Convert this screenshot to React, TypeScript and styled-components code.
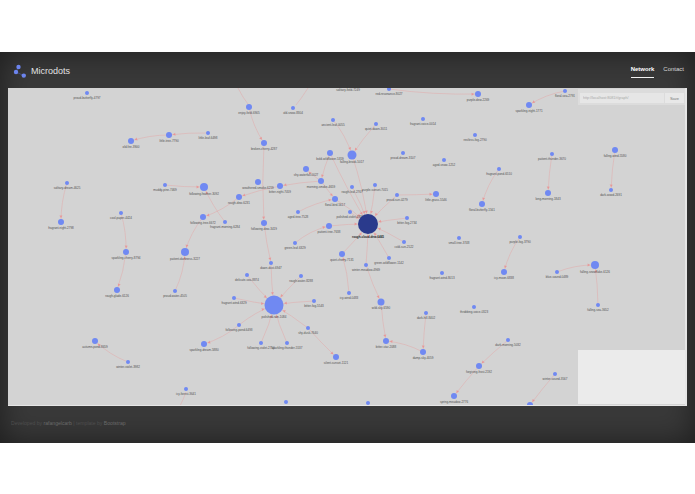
import React, { FC } from "react";
import styled, { createGlobalStyle } from "styled-components";

type GraphNode = { id: string; x: number; y: number; r: number; dark?: boolean };

const NODES: GraphNode[] = [
  { id: "proud-butterfly-4797", x: 87, y: 93, r: 2 },
  { id: "little-tree-7790", x: 169, y: 135, r: 3 },
  { id: "little-leaf-6498", x: 208, y: 133, r: 2 },
  { id: "old-fire-3900", x: 131, y: 141, r: 3 },
  { id: "enjoy-field-6905", x: 249, y: 107, r: 3 },
  { id: "old-snow-8304", x: 293, y: 108, r: 2 },
  { id: "solitary-field-7249", x: 348, y: 85, r: 2 },
  { id: "red-resonance-8027", x: 389, y: 89, r: 2 },
  { id: "ancient-leaf-0055", x: 333, y: 120, r: 2 },
  { id: "quiet-dawn-3011", x: 376, y: 124, r: 2 },
  { id: "fragrant-voice-0014", x: 423, y: 119, r: 2 },
  { id: "broken-cherry-4287", x: 264, y: 143, r: 3 },
  { id: "bold-wildflower-5359", x: 330, y: 153, r: 3 },
  { id: "falling-brook-5017", x: 352, y: 155, r: 4.5 },
  { id: "proud-dream-3107", x: 403, y: 153, r: 2 },
  { id: "aged-snow-1252", x: 444, y: 160, r: 2 },
  { id: "shy-waterfall-0027", x: 306, y: 169, r: 3 },
  { id: "morning-smoke-4659", x: 321, y: 181, r: 3 },
  { id: "weathered-smoke-6259", x: 258, y: 182, r: 3 },
  { id: "bitter-night-7059", x: 280, y: 186, r: 3 },
  { id: "rough-leaf-2767", x: 352, y: 187, r: 2 },
  { id: "purple-sunset-7015", x: 375, y: 185, r: 2 },
  { id: "proud-sun-0279", x: 397, y: 195, r: 2 },
  { id: "little-grass-5546", x: 436, y: 194, r: 3 },
  { id: "rough-dew-6231", x: 239, y: 197, r: 3 },
  { id: "floral-bird-5617", x: 335, y: 199, r: 3 },
  { id: "purple-dew-2269", x: 478, y: 94, r: 3 },
  { id: "floral-sea-2791", x: 565, y: 91, r: 2 },
  { id: "sparkling-night-1771", x: 529, y: 105, r: 3 },
  { id: "restless-fog-2790", x: 475, y: 135, r: 2 },
  { id: "patient-thunder-3670", x: 552, y: 154, r: 2 },
  { id: "fragrant-pond-6510", x: 499, y: 169, r: 2 },
  { id: "falling-wind-5580", x: 615, y: 150, r: 3 },
  { id: "solitary-dream-4625", x: 67, y: 183, r: 2 },
  { id: "fragrant-night-2798", x: 61, y: 222, r: 3 },
  { id: "muddy-pine-7469", x: 165, y: 185, r: 2 },
  { id: "following-feather-3092", x: 204, y: 187, r: 4 },
  { id: "cool-paper-4424", x: 121, y: 213, r: 2 },
  { id: "following-tree-6672", x: 203, y: 217, r: 3 },
  { id: "fragrant-morning-6284", x: 225, y: 222, r: 2 },
  { id: "sparkling-cherry-8794", x: 126, y: 252, r: 3 },
  { id: "patient-darkness-3227", x: 185, y: 252, r: 4 },
  { id: "rough-glade-6126", x: 117, y: 290, r: 3 },
  { id: "proud-water-4505", x: 175, y: 291, r: 2 },
  { id: "aged-tree-7528", x: 298, y: 212, r: 2 },
  { id: "polished-violet-0338", x: 350, y: 212, r: 2 },
  { id: "rough-cloud-dew-6465", x: 368, y: 224, r: 10, dark: true },
  { id: "bitter-fog-2734", x: 407, y: 218, r: 2 },
  { id: "patient-tree-7638", x: 329, y: 226, r: 3 },
  { id: "following-dew-3419", x: 264, y: 223, r: 3 },
  { id: "cold-sun-2522", x: 404, y: 242, r: 2 },
  { id: "green-leaf-6329", x: 295, y: 243, r: 2 },
  { id: "quiet-cherry-7131", x: 342, y: 254, r: 3 },
  { id: "green-wildflower-1142", x: 389, y: 258, r: 2 },
  { id: "winter-meadow-4969", x: 366, y: 265, r: 2 },
  { id: "dawn-dust-6947", x: 271, y: 263, r: 2 },
  { id: "fragrant-wind-8013", x: 442, y: 273, r: 2 },
  { id: "delicate-sea-8874", x: 247, y: 275, r: 2 },
  { id: "rough-water-8288", x: 301, y: 276, r: 2 },
  { id: "icy-wind-0483", x: 349, y: 293, r: 2 },
  { id: "polished-rain-1084", x: 274, y: 305, r: 9.5 },
  { id: "small-tree-3748", x: 459, y: 238, r: 2 },
  { id: "wild-sky-6590", x: 381, y: 302, r: 3.5 },
  { id: "floral-butterfly-1561", x: 482, y: 204, r: 3 },
  { id: "long-morning-1843", x: 548, y: 193, r: 3 },
  { id: "dark-wood-2691", x: 611, y: 190, r: 2 },
  { id: "purple-fog-3790", x: 520, y: 237, r: 2 },
  { id: "icy-moon-6838", x: 504, y: 272, r: 3 },
  { id: "blue-sound-0489", x: 557, y: 272, r: 2 },
  { id: "falling-snowflake-6126", x: 595, y: 265, r: 4 },
  { id: "falling-sea-3652", x: 598, y: 305, r: 2 },
  { id: "throbbing-voice-0323", x: 474, y: 307, r: 2 },
  { id: "fragrant-wind-6329", x: 234, y: 298, r: 2 },
  { id: "bitter-fog-5543", x: 314, y: 301, r: 2 },
  { id: "following-pond-6493", x: 239, y: 325, r: 2 },
  { id: "shy-dusk-7640", x: 308, y: 328, r: 2 },
  { id: "following-violet-2750", x: 261, y: 343, r: 2 },
  { id: "sparkling-thunder-5537", x: 287, y: 343, r: 2 },
  { id: "sparkling-dream-5880", x: 204, y: 344, r: 3 },
  { id: "silent-sunset-1121", x: 336, y: 357, r: 3 },
  { id: "autumn-pond-8659", x: 95, y: 341, r: 3 },
  { id: "winter-violet-3982", x: 128, y: 362, r: 2 },
  { id: "icy-forest-3641", x: 186, y: 389, r: 2 },
  { id: "silly-sun-3821", x: 286, y: 402, r: 2 },
  { id: "small-moon-1184", x: 368, y: 403, r: 2 },
  { id: "dark-hill-8402", x: 426, y: 313, r: 2 },
  { id: "bitter-star-2088", x: 386, y: 341, r: 3 },
  { id: "damp-sky-4059", x: 423, y: 352, r: 3 },
  { id: "dark-morning-5032", x: 508, y: 340, r: 2 },
  { id: "forgiving-frost-2192", x: 479, y: 366, r: 3 },
  { id: "winter-sound-3567", x: 555, y: 374, r: 2 },
  { id: "spring-meadow-2776", x: 454, y: 396, r: 3 },
  { id: "calm-river-4410", x: 530, y: 405, r: 3 },
];

// source, target, bend of the curve
const EDGES: [string, string, number][] = [
  ["little-leaf-6498", "little-tree-7790", 0.04],
  ["little-tree-7790", "old-fire-3900", 0.08],
  ["solitary-dream-4625", "fragrant-night-2798", 0.08],
  ["cool-paper-4424", "sparkling-cherry-8794", -0.08],
  ["sparkling-cherry-8794", "rough-glade-6126", -0.06],
  ["muddy-pine-7469", "following-feather-3092", 0.03],
  ["fragrant-morning-6284", "following-feather-3092", -0.06],
  ["rough-dew-6231", "following-tree-6672", -0.1],
  ["following-tree-6672", "patient-darkness-3227", 0.1],
  ["proud-water-4505", "patient-darkness-3227", 0.1],
  ["bitter-night-7059", "rough-dew-6231", 0.04],
  ["morning-smoke-4659", "bitter-night-7059", 0.03],
  ["morning-smoke-4659", "shy-waterfall-0027", -0.05],
  ["bold-wildflower-5359", "morning-smoke-4659", 0.04],
  ["morning-smoke-4659", "floral-bird-5617", 0.02],
  ["enjoy-field-6905", "broken-cherry-4287", 0.1],
  ["broken-cherry-4287", "following-dew-3419", 0.03],
  ["following-dew-3419", "dawn-dust-6947", 0.03],
  ["dawn-dust-6947", "polished-rain-1084", 0.03],
  ["ancient-leaf-0055", "falling-brook-5017", -0.1],
  ["quiet-dawn-3011", "falling-brook-5017", 0.04],
  ["delicate-sea-8874", "polished-rain-1084", 0.04],
  ["rough-water-8288", "polished-rain-1084", 0.03],
  ["fragrant-wind-6329", "polished-rain-1084", 0.03],
  ["bitter-fog-5543", "polished-rain-1084", 0.03],
  ["following-pond-6493", "polished-rain-1084", -0.08],
  ["shy-dusk-7640", "polished-rain-1084", 0.03],
  ["following-violet-2750", "polished-rain-1084", 0.06],
  ["sparkling-thunder-5537", "polished-rain-1084", -0.06],
  ["following-pond-6493", "sparkling-dream-5880", -0.1],
  ["shy-dusk-7640", "silent-sunset-1121", 0.02],
  ["winter-violet-3982", "autumn-pond-8659", -0.1],
  ["rough-leaf-2767", "rough-cloud-dew-6465", -0.05],
  ["purple-sunset-7015", "rough-cloud-dew-6465", -0.05],
  ["proud-sun-0279", "rough-cloud-dew-6465", 0.04],
  ["bitter-fog-2734", "rough-cloud-dew-6465", 0.03],
  ["patient-tree-7638", "rough-cloud-dew-6465", -0.03],
  ["cold-sun-2522", "rough-cloud-dew-6465", 0.04],
  ["green-wildflower-1142", "rough-cloud-dew-6465", 0.03],
  ["winter-meadow-4969", "rough-cloud-dew-6465", 0.02],
  ["quiet-cherry-7131", "rough-cloud-dew-6465", 0.04],
  ["falling-brook-5017", "rough-cloud-dew-6465", -0.05],
  ["bold-wildflower-5359", "rough-cloud-dew-6465", 0.03],
  ["floral-bird-5617", "rough-cloud-dew-6465", -0.05],
  ["polished-violet-0338", "rough-cloud-dew-6465", 0.03],
  ["green-leaf-6329", "patient-tree-7638", -0.12],
  ["aged-tree-7528", "floral-bird-5617", -0.08],
  ["proud-sun-0279", "little-grass-5546", 0.01],
  ["winter-meadow-4969", "wild-sky-6590", 0.04],
  ["wild-sky-6590", "bitter-star-2088", 0.03],
  ["damp-sky-4059", "bitter-star-2088", 0.1],
  ["dark-hill-8402", "damp-sky-4059", 0.02],
  ["dark-morning-5032", "forgiving-frost-2192", 0.02],
  ["forgiving-frost-2192", "spring-meadow-2776", 0.02],
  ["winter-sound-3567", "calm-river-4410", 0.02],
  ["purple-fog-3790", "icy-moon-6838", 0.1],
  ["blue-sound-0489", "falling-snowflake-6126", -0.1],
  ["falling-sea-3652", "falling-snowflake-6126", 0.03],
  ["patient-thunder-3670", "long-morning-1843", 0.03],
  ["falling-wind-5580", "dark-wood-2691", 0.03],
  ["fragrant-pond-6510", "floral-butterfly-1561", 0.1],
  ["floral-sea-2791", "sparkling-night-1771", 0.1],
  ["red-resonance-8027", "purple-dew-2269", 0.04],
  ["icy-wind-0483", "quiet-cherry-7131", 0.06],
];

// the ones that run out of the visible part of the canvas
const LOOSE_LINES = [
  "M238 88 Q243 98 248 104",
  "M308 88 Q301 99 296 105",
  "M186 392 Q183 400 180 406",
];

const nodeById = new Map(NODES.map((n) => [n.id, n]));

const buildEdge = (from: string, to: string, bend: number) => {
  const a = nodeById.get(from)!;
  const b = nodeById.get(to)!;
  const dx = b.x - a.x;
  const dy = b.y - a.y;
  const cx = (a.x + b.x) / 2 - dy * bend;
  const cy = (a.y + b.y) / 2 + dx * bend;
  const ax = b.x - cx;
  const ay = b.y - cy;
  const len = Math.hypot(ax, ay) || 1;
  const ux = ax / len;
  const uy = ay / len;
  const tipX = b.x - ux * (b.r + 0.8);
  const tipY = b.y - uy * (b.r + 0.8);
  const backX = tipX - ux * 2.6;
  const backY = tipY - uy * 2.6;
  const head = [
    `${tipX},${tipY}`,
    `${backX - uy * 1.5},${backY + ux * 1.5}`,
    `${backX + uy * 1.5},${backY - ux * 1.5}`,
  ].join(" ");
  return { line: `M${a.x} ${a.y} Q${cx} ${cy} ${b.x} ${b.y}`, head };
};

const App: FC = () => (
  <>
    <GlobalStyle />
    <Shell>
      <Header>
        <Brand>
          <svg width="16" height="16" viewBox="0 0 16 16">
            <path d="M6.5 4 L4 9 L11.8 12.6" fill="none" stroke="#4a5aa8" strokeWidth="0.6" />
            <circle cx="6.5" cy="4" r="2.2" fill="#6c84ee" />
            <circle cx="4" cy="9" r="2.2" fill="#6c84ee" />
            <circle cx="11.8" cy="12.6" r="2.2" fill="#6c84ee" />
          </svg>
          <BrandName>Microdots</BrandName>
        </Brand>
        <Nav>
          <NavLink $active>Network</NavLink>
          <NavLink>Contact</NavLink>
        </Nav>
      </Header>
      <GraphPanel>
        <svg width="677" height="317" viewBox="8 88 677 317">
          {EDGES.map(([from, to, bend]) => {
            const { line, head } = buildEdge(from, to, bend);
            return (
              <g key={`${from}-${to}`}>
                <EdgeLine d={line} />
                <EdgeHead points={head} />
              </g>
            );
          })}
          {LOOSE_LINES.map((d) => (
            <EdgeLine key={d} d={d} />
          ))}
          {NODES.map((n) => (
            <g key={n.id}>
              <NodeDot cx={n.x} cy={n.y} r={n.r} $dark={n.dark} />
              <NodeLabel x={n.x} y={n.y + n.r + 3.6} $dark={n.dark}>
                {n.id}
              </NodeLabel>
            </g>
          ))}
        </svg>
        <SaveBar>
          <UrlInput readOnly value="http://localhost:8081/r/graph/" />
          <SaveButton>Save</SaveButton>
        </SaveBar>
        <MiniMap />
      </GraphPanel>
      <Footer>
        Developed by <FooterLink>rafangelcarb</FooterLink> | template by <FooterLink>Bootstrap</FooterLink>
      </Footer>
    </Shell>
  </>
);

const GlobalStyle = createGlobalStyle`
  html, body {
    margin: 0;
    background: #fff;
    font-family: "Liberation Sans", Arial, sans-serif;
  }
`;

const Shell = styled.div`
  margin-top: 52px;
  height: 391px;
  display: flex;
  flex-direction: column;
  background: #393939;
  box-shadow: inset 0 0 30px rgba(0, 0, 0, 0.5);
`;

const Header = styled.header`
  height: 36px;
  flex: none;
  display: flex;
  align-items: flex-start;
  justify-content: space-between;
  padding: 0 11px 0 12px;
`;

const Brand = styled.div`
  display: flex;
  align-items: center;
  gap: 3px;
  height: 38px;
`;

const BrandName = styled.span`
  color: #e2e2e2;
  font-size: 9px;
  line-height: 1;
`;

const Nav = styled.nav`
  display: flex;
  gap: 9px;
  padding-top: 14px;
`;

const NavLink = styled.a<{ $active?: boolean }>`
  color: ${(p) => (p.$active ? "#fff" : "#d8d8d8")};
  font-size: 6px;
  font-weight: ${(p) => (p.$active ? 700 : 400)};
  line-height: 7px;
  padding-bottom: 4px;
  height: 7px;
  border-bottom: 1px solid ${(p) => (p.$active ? "#f2f2f2" : "transparent")};
`;

const GraphPanel = styled.main`
  position: relative;
  flex: none;
  margin: 0 8px;
  width: 677px;
  height: 317px;
  overflow: hidden;
  background: #d3d3d3;
  border-right: 2px solid #e6e6e6;
  border-bottom: 1px solid #e6e6e6;

  svg {
    display: block;
  }
`;

const EdgeLine = styled.path`
  fill: none;
  stroke: #e2a8a8;
  stroke-width: 0.5;
`;

const EdgeHead = styled.polygon`
  fill: #ec8a8a;
  opacity: 0.75;
`;

const NodeDot = styled.circle<{ $dark?: boolean }>`
  fill: ${(p) => (p.$dark ? "#2a3a8c" : "#7089f2")};
`;

const NodeLabel = styled.text<{ $dark?: boolean }>`
  fill: ${(p) => (p.$dark ? "#222" : "#505050")};
  font-family: "Liberation Sans", Arial, sans-serif;
  font-size: 3px;
  font-weight: ${(p) => (p.$dark ? 700 : 400)};
  text-anchor: middle;
`;

const SaveBar = styled.div`
  position: absolute;
  top: 1px;
  right: 0;
  width: 107px;
  height: 16px;
  padding: 4px 1px 2px 2px;
  box-sizing: border-box;
  display: flex;
  background: #dcdcdc;
`;

const UrlInput = styled.input`
  flex: 1;
  min-width: 0;
  box-sizing: border-box;
  height: 10px;
  padding: 0 3px;
  border: 0;
  outline: 0;
  background: #e6e6e6;
  color: #a8a8a8;
  font-family: "Liberation Sans", Arial, sans-serif;
  font-size: 3.6px;
`;

const SaveButton = styled.button`
  width: 19px;
  height: 10px;
  margin-left: 1px;
  padding: 0;
  border: 0;
  background: #e8e8e8;
  color: #777;
  font-family: "Liberation Sans", Arial, sans-serif;
  font-size: 4px;
`;

const MiniMap = styled.div`
  position: absolute;
  right: 0;
  bottom: 1px;
  width: 107px;
  height: 54px;
  background: #ebebeb;
`;

const Footer = styled.footer`
  flex: 1;
  display: flex;
  align-items: center;
  white-space: pre;
  padding: 0 0 4px 11px;
  color: #4e4e4e;
  font-size: 5.1px;
`;

const FooterLink = styled.a`
  color: #6a6a6a;
`;

export default App;
